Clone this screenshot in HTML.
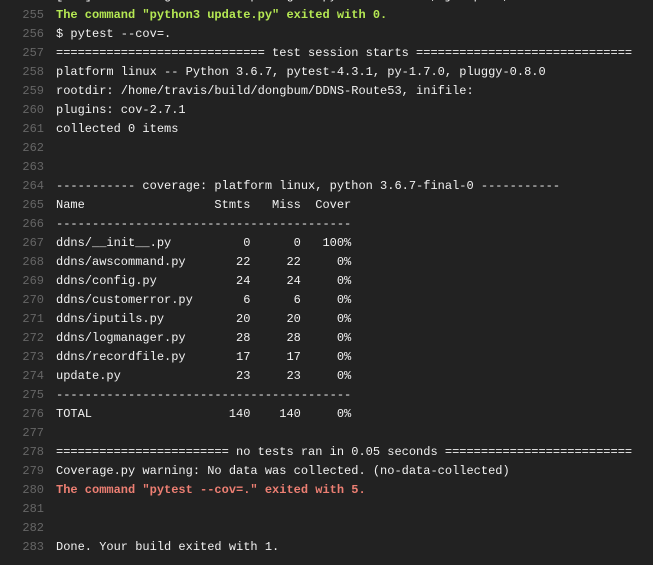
<!DOCTYPE html>
<html><head><meta charset="utf-8"><style>
html,body{margin:0;padding:0;background:#222;width:653px;height:565px;overflow:hidden}
.w{position:absolute;top:-13.5px;left:0;font-family:"Liberation Mono",monospace;font-size:12px;line-height:19px;color:#f1f1f1}
.l{display:flex;height:19px;white-space:pre}
.n{width:44px;text-align:right;color:#666;padding-right:12px;flex:none}
.g{color:#b5e853;font-weight:bold}
.r{color:#ed7f73;font-weight:bold}
</style></head><body><div class="w"><div class="l"><span class="n">254</span><span>[0/0] Installing collected packages: python-dateutil, jmespath, boto</span></div><div class="l"><span class="n">255</span><span class="g">The command "python3 update.py" exited with 0.</span></div><div class="l"><span class="n">256</span><span>$ pytest --cov=.</span></div><div class="l"><span class="n">257</span><span>============================= test session starts ==============================</span></div><div class="l"><span class="n">258</span><span>platform linux -- Python 3.6.7, pytest-4.3.1, py-1.7.0, pluggy-0.8.0</span></div><div class="l"><span class="n">259</span><span>rootdir: /home/travis/build/dongbum/DDNS-Route53, inifile:</span></div><div class="l"><span class="n">260</span><span>plugins: cov-2.7.1</span></div><div class="l"><span class="n">261</span><span>collected 0 items</span></div><div class="l"><span class="n">262</span><span></span></div><div class="l"><span class="n">263</span><span></span></div><div class="l"><span class="n">264</span><span>----------- coverage: platform linux, python 3.6.7-final-0 -----------</span></div><div class="l"><span class="n">265</span><span>Name                  Stmts   Miss  Cover</span></div><div class="l"><span class="n">266</span><span>-----------------------------------------</span></div><div class="l"><span class="n">267</span><span>ddns/__init__.py          0      0   100%</span></div><div class="l"><span class="n">268</span><span>ddns/awscommand.py       22     22     0%</span></div><div class="l"><span class="n">269</span><span>ddns/config.py           24     24     0%</span></div><div class="l"><span class="n">270</span><span>ddns/customerror.py       6      6     0%</span></div><div class="l"><span class="n">271</span><span>ddns/iputils.py          20     20     0%</span></div><div class="l"><span class="n">272</span><span>ddns/logmanager.py       28     28     0%</span></div><div class="l"><span class="n">273</span><span>ddns/recordfile.py       17     17     0%</span></div><div class="l"><span class="n">274</span><span>update.py                23     23     0%</span></div><div class="l"><span class="n">275</span><span>-----------------------------------------</span></div><div class="l"><span class="n">276</span><span>TOTAL                   140    140     0%</span></div><div class="l"><span class="n">277</span><span></span></div><div class="l"><span class="n">278</span><span>======================== no tests ran in 0.05 seconds ==========================</span></div><div class="l"><span class="n">279</span><span>Coverage.py warning: No data was collected. (no-data-collected)</span></div><div class="l"><span class="n">280</span><span class="r">The command "pytest --cov=." exited with 5.</span></div><div class="l"><span class="n">281</span><span></span></div><div class="l"><span class="n">282</span><span></span></div><div class="l"><span class="n">283</span><span>Done. Your build exited with 1.</span></div></div></body></html>
